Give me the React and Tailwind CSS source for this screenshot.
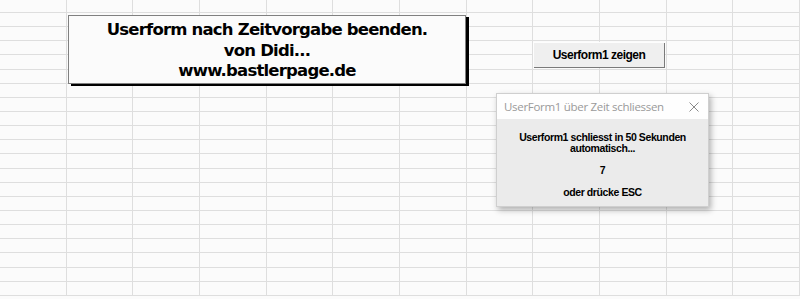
import React from 'react';

const rowHeights = [13, ...Array(20).fill(14.15)];

function SheetGrid() {
  return (
    <div className="w-[800px] h-[299px] overflow-hidden bg-[#fbfbfb]">
      {rowHeights.map((h, r) => (
        <div
          key={r}
          className={`grid grid-cols-12 ${r === 0 ? 'h-[13px]' : 'h-[14.15px]'}`}
        >
          {Array.from({ length: 12 }).map((_, c) => (
            <div key={c} className="border-r border-b border-[#dedede]" />
          ))}
        </div>
      ))}
    </div>
  );
}

export default function App() {
  return (
    <div className="relative w-[800px] h-[299px] overflow-hidden font-['Liberation_Sans',sans-serif]">
      <SheetGrid />

      {/* Title text box */}
      <div className="absolute left-[68px] top-[15px] w-[398px] h-[69px] bg-[#fbfbfb] border border-[#808080] shadow-[3px_2px_0_#000]">
        <div className="flex flex-col items-center pt-[4px] text-[16.5px] leading-[20.5px] font-bold text-black font-['DejaVu_Sans',sans-serif] tracking-[-0.8px]">
          <span>Userform nach Zeitvorgabe beenden.</span>
          <span>von Didi...</span>
          <span>www.bastlerpage.de</span>
        </div>
      </div>

      {/* Command button */}
      <div className="absolute left-[533px] top-[42px] w-[131px] h-[25px] flex items-center justify-center bg-[#efefef] border-t border-l border-[#fdfdfd] shadow-[1px_1px_0_#7a7a7a] text-[12px] font-bold text-black font-['Liberation_Sans',sans-serif] tracking-[-0.5px]">
        Userform1 zeigen
      </div>

      {/* UserForm dialog */}
      <div className="absolute left-[496px] top-[93px] w-[213px] h-[114px] flex flex-col bg-[#ebebeb] border border-[#cfcfcf] shadow-[2px_3px_6px_rgba(0,0,0,0.3)]">
        <div className="h-[25px] shrink-0 flex items-center justify-between pl-[7px] pr-[9px] bg-[#fefefe]">
          <span className="text-[11.5px] text-[#9a9a9a] font-['Open_Sans',sans-serif] tracking-[-0.3px]">
            UserForm1 über Zeit schliessen
          </span>
          <svg width="10" height="10" viewBox="0 0 10 10" className="text-[#8a8a8a]">
            <path d="M0.5 0.5 L9.5 9.5 M9.5 0.5 L0.5 9.5" stroke="currentColor" strokeWidth="1" fill="none" />
          </svg>
        </div>
        <div className="flex-1 flex flex-col items-center pt-[13px] text-[10.5px] leading-[11px] font-bold text-black font-['Liberation_Sans',sans-serif] tracking-[-0.4px]">
          <span>Userform1 schliesst in 50 Sekunden</span>
          <span>automatisch...</span>
          <span className="mt-[11px]">7</span>
          <span className="mt-[11px]">oder drücke ESC</span>
        </div>
      </div>
    </div>
  );
}
